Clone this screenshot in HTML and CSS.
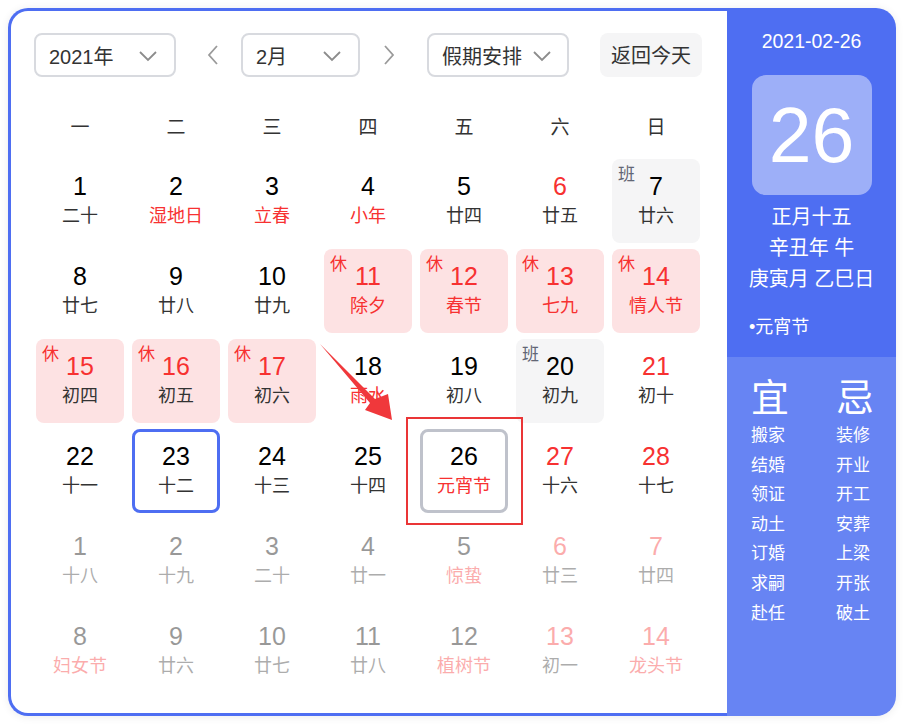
FILE: index.html
```html
<!DOCTYPE html>
<html lang="zh">
<head>
<meta charset="utf-8">
<link rel="stylesheet" href="styles.css">
</head>
<body>
<div class="page">
  <div class="cal">
    <div class="main">
      <div class="toolbar">
        <div class="select year"><span>2021年</span><svg class="chev" viewBox="0 0 20 12"><path d="M2 2 L10 10 L18 2"/></svg></div>
        <div class="nav prev"><svg viewBox="0 0 12 22"><path d="M10 2 L2 11 L10 20"/></svg></div>
        <div class="select month"><span>2月</span><svg class="chev" viewBox="0 0 20 12"><path d="M2 2 L10 10 L18 2"/></svg></div>
        <div class="nav next"><svg viewBox="0 0 12 22"><path d="M2 2 L10 11 L2 20"/></svg></div>
        <div class="select holiday"><span>假期安排</span><svg class="chev" viewBox="0 0 20 12"><path d="M2 2 L10 10 L18 2"/></svg></div>
        <div class="today-btn">返回今天</div>
      </div>
      <div class="weekdays">
        <div>一</div><div>二</div><div>三</div><div>四</div><div>五</div><div>六</div><div>日</div>
      </div>
      <div class="days">
        <div class="day"><div class="num">1</div><div class="lunar">二十</div></div>
        <div class="day"><div class="num">2</div><div class="lunar lred">湿地日</div></div>
        <div class="day"><div class="num">3</div><div class="lunar lred">立春</div></div>
        <div class="day"><div class="num">4</div><div class="lunar lred">小年</div></div>
        <div class="day"><div class="num">5</div><div class="lunar">廿四</div></div>
        <div class="day"><div class="num red">6</div><div class="lunar">廿五</div></div>
        <div class="day work"><span class="tag">班</span><div class="num">7</div><div class="lunar">廿六</div></div>

        <div class="day"><div class="num">8</div><div class="lunar">廿七</div></div>
        <div class="day"><div class="num">9</div><div class="lunar">廿八</div></div>
        <div class="day"><div class="num">10</div><div class="lunar">廿九</div></div>
        <div class="day rest"><span class="tag">休</span><div class="num red">11</div><div class="lunar lred">除夕</div></div>
        <div class="day rest"><span class="tag">休</span><div class="num red">12</div><div class="lunar lred">春节</div></div>
        <div class="day rest"><span class="tag">休</span><div class="num red">13</div><div class="lunar lred">七九</div></div>
        <div class="day rest"><span class="tag">休</span><div class="num red">14</div><div class="lunar lred">情人节</div></div>

        <div class="day rest"><span class="tag">休</span><div class="num red">15</div><div class="lunar">初四</div></div>
        <div class="day rest"><span class="tag">休</span><div class="num red">16</div><div class="lunar">初五</div></div>
        <div class="day rest"><span class="tag">休</span><div class="num red">17</div><div class="lunar">初六</div></div>
        <div class="day"><div class="num">18</div><div class="lunar lred">雨水</div></div>
        <div class="day"><div class="num">19</div><div class="lunar">初八</div></div>
        <div class="day work"><span class="tag">班</span><div class="num">20</div><div class="lunar">初九</div></div>
        <div class="day"><div class="num red">21</div><div class="lunar">初十</div></div>

        <div class="day"><div class="num">22</div><div class="lunar">十一</div></div>
        <div class="day sel"><div class="num">23</div><div class="lunar">十二</div></div>
        <div class="day"><div class="num">24</div><div class="lunar">十三</div></div>
        <div class="day"><div class="num">25</div><div class="lunar">十四</div></div>
        <div class="day today"><div class="num">26</div><div class="lunar lred">元宵节</div></div>
        <div class="day"><div class="num red">27</div><div class="lunar">十六</div></div>
        <div class="day"><div class="num red">28</div><div class="lunar">十七</div></div>

        <div class="day other"><div class="num">1</div><div class="lunar">十八</div></div>
        <div class="day other"><div class="num">2</div><div class="lunar">十九</div></div>
        <div class="day other"><div class="num">3</div><div class="lunar">二十</div></div>
        <div class="day other"><div class="num">4</div><div class="lunar">廿一</div></div>
        <div class="day other"><div class="num">5</div><div class="lunar lred">惊蛰</div></div>
        <div class="day other"><div class="num red">6</div><div class="lunar">廿三</div></div>
        <div class="day other"><div class="num red">7</div><div class="lunar">廿四</div></div>

        <div class="day other"><div class="num">8</div><div class="lunar lred">妇女节</div></div>
        <div class="day other"><div class="num">9</div><div class="lunar">廿六</div></div>
        <div class="day other"><div class="num">10</div><div class="lunar">廿七</div></div>
        <div class="day other"><div class="num">11</div><div class="lunar">廿八</div></div>
        <div class="day other"><div class="num">12</div><div class="lunar lred">植树节</div></div>
        <div class="day other"><div class="num red">13</div><div class="lunar">初一</div></div>
        <div class="day other"><div class="num red">14</div><div class="lunar lred">龙头节</div></div>
      </div>
    </div>
    <div class="side">
      <div class="side-top">
        <div class="side-date">2021-02-26</div>
        <div class="big-day">26</div>
        <div class="lunar-info">
          <div>正月十五</div>
          <div>辛丑年 牛</div>
          <div>庚寅月 乙巳日</div>
        </div>
        <div class="festival">•元宵节</div>
      </div>
      <div class="side-bottom">
        <div class="col">
          <div class="head">宜</div>
          <div>搬家</div><div>结婚</div><div>领证</div><div>动土</div><div>订婚</div><div>求嗣</div><div>赴任</div>
        </div>
        <div class="col">
          <div class="head">忌</div>
          <div>装修</div><div>开业</div><div>开工</div><div>安葬</div><div>上梁</div><div>开张</div><div>破土</div>
        </div>
      </div>
    </div>
  </div>
  <div class="mark-box"></div>
  <svg class="mark-arrow" viewBox="0 0 904 724"><polygon points="320,344 375,399 388,394 392,420 365,410 370,403"/></svg>
</div>
</body>
</html>
```

FILE: styles.css
```css
* { box-sizing: border-box; }
html, body { margin: 0; padding: 0; background: #fff; }
body {
  font-family: "Liberation Sans", "Noto Sans CJK SC", sans-serif;
  color: #333;
}
.page {
  position: relative;
  width: 904px;
  height: 724px;
  padding: 8px;
}
.cal {
  display: flex;
  width: 888px;
  height: 708px;
  border-radius: 20px;
  box-shadow: 0 1px 8px rgba(0, 0, 0, 0.08);
}
.main {
  width: 719px;
  height: 708px;
  border: 3px solid #4e6ef2;
  border-right: none;
  border-radius: 20px 0 0 20px;
  padding: 22px 0 0 23px;
}
.toolbar {
  display: flex;
  align-items: center;
  width: 668px;
  height: 44px;
}
.select {
  height: 44px;
  border: 2px solid #d8dadf;
  border-radius: 8px;
  display: flex;
  align-items: center;
  justify-content: space-between;
  padding: 0 16px 0 13px;
  font-size: 20px;
  color: #333;
}
.select span { line-height: 24px; padding-top: 3px; }
.year { width: 142px; }
.month { width: 119px; }
.holiday { width: 142px; padding-right: 15px; }
.chev {
  width: 20px;
  height: 12px;
  margin-top: 2px;
  fill: none;
  stroke: #8c8c8c;
  stroke-width: 1.8;
}
.nav {
  width: 24px;
  height: 44px;
  display: flex;
  align-items: center;
  justify-content: center;
}
.nav svg {
  width: 12px;
  height: 22px;
  fill: none;
  stroke: #9a9a9a;
  stroke-width: 1.8;
}
.prev { margin: 0 16px 0 25px; }
.next { margin: 0 26px 0 17px; }
.today-btn {
  margin-left: auto;
  width: 102px;
  height: 44px;
  border-radius: 8px;
  background: #f5f5f6;
  font-size: 20px;
  line-height: 46px;
  text-align: center;
  color: #333;
}
.weekdays {
  display: grid;
  grid-template-columns: repeat(7, 88px);
  column-gap: 8px;
  margin: 31px 0 0 2px;
  height: 40px;
}
.weekdays div {
  text-align: center;
  font-size: 19px;
  line-height: 40px;
  color: #333;
}
.days {
  display: grid;
  grid-template-columns: repeat(7, 88px);
  grid-auto-rows: 84px;
  column-gap: 8px;
  row-gap: 6px;
  margin: 11px 0 0 2px;
}
.day {
  position: relative;
  border: 3px solid transparent;
  border-radius: 8px;
  padding-top: 9px;
  text-align: center;
}
.num {
  font-size: 25px;
  line-height: 30px;
  color: #000;
}
.lunar {
  font-size: 18px;
  line-height: 30px;
  color: #333;
}
.red { color: #f73131; }
.lred { color: #f73131; }
.rest { background: #fde2e3; }
.work { background: #f5f5f6; }
.tag {
  position: absolute;
  top: 4px;
  left: 3px;
  font-size: 17px;
  line-height: 18px;
  color: #f73131;
}
.work .tag { color: #626675; }
.sel { border-color: #4e6ef2; }
.today { border-color: #bfc2cb; }
.other .num, .other .lunar { opacity: 0.4; }

.side {
  width: 169px;
  height: 708px;
  border-radius: 0 20px 20px 0;
  overflow: hidden;
  display: flex;
  flex-direction: column;
  color: #fff;
}
.side-top {
  height: 349px;
  flex-shrink: 0;
  background: #4e6ef2;
  padding: 21px 0 0 0;
  display: flex;
  flex-direction: column;
  align-items: center;
}
.side-top > * { flex-shrink: 0; }
.side-date {
  text-align: center;
  font-size: 19.5px;
  line-height: 24px;
}
.big-day {
  margin-top: 22px;
  width: 120px;
  height: 120px;
  border-radius: 14px;
  background: rgba(255, 255, 255, 0.45);
  display: flex;
  align-items: center;
  justify-content: center;
  font-size: 77px;
  line-height: 1;
}
.lunar-info {
  margin-top: 7px;
  text-align: center;
  font-size: 20px;
  line-height: 31px;
  white-space: nowrap;
}
.festival {
  align-self: flex-start;
  margin: 20px 0 0 22px;
  font-size: 18px;
  line-height: 24px;
}
.side-bottom {
  flex: 1;
  background: #6784f3;
  display: flex;
  justify-content: center;
  gap: 49px;
  padding: 23px 0 0 0;
}
.col {
  width: 36px;
  font-size: 17px;
  line-height: 29.6px;
  white-space: nowrap;
}
.col .head {
  font-size: 38px;
  line-height: 36px;
  margin-bottom: 5px;
}
.mark-box {
  position: absolute;
  left: 406px;
  top: 417px;
  width: 117px;
  height: 108px;
  border: 2px solid #ea3536;
}
.mark-arrow {
  position: absolute;
  left: 0;
  top: 0;
  width: 904px;
  height: 724px;
  fill: #f0383b;
  pointer-events: none;
}
```
